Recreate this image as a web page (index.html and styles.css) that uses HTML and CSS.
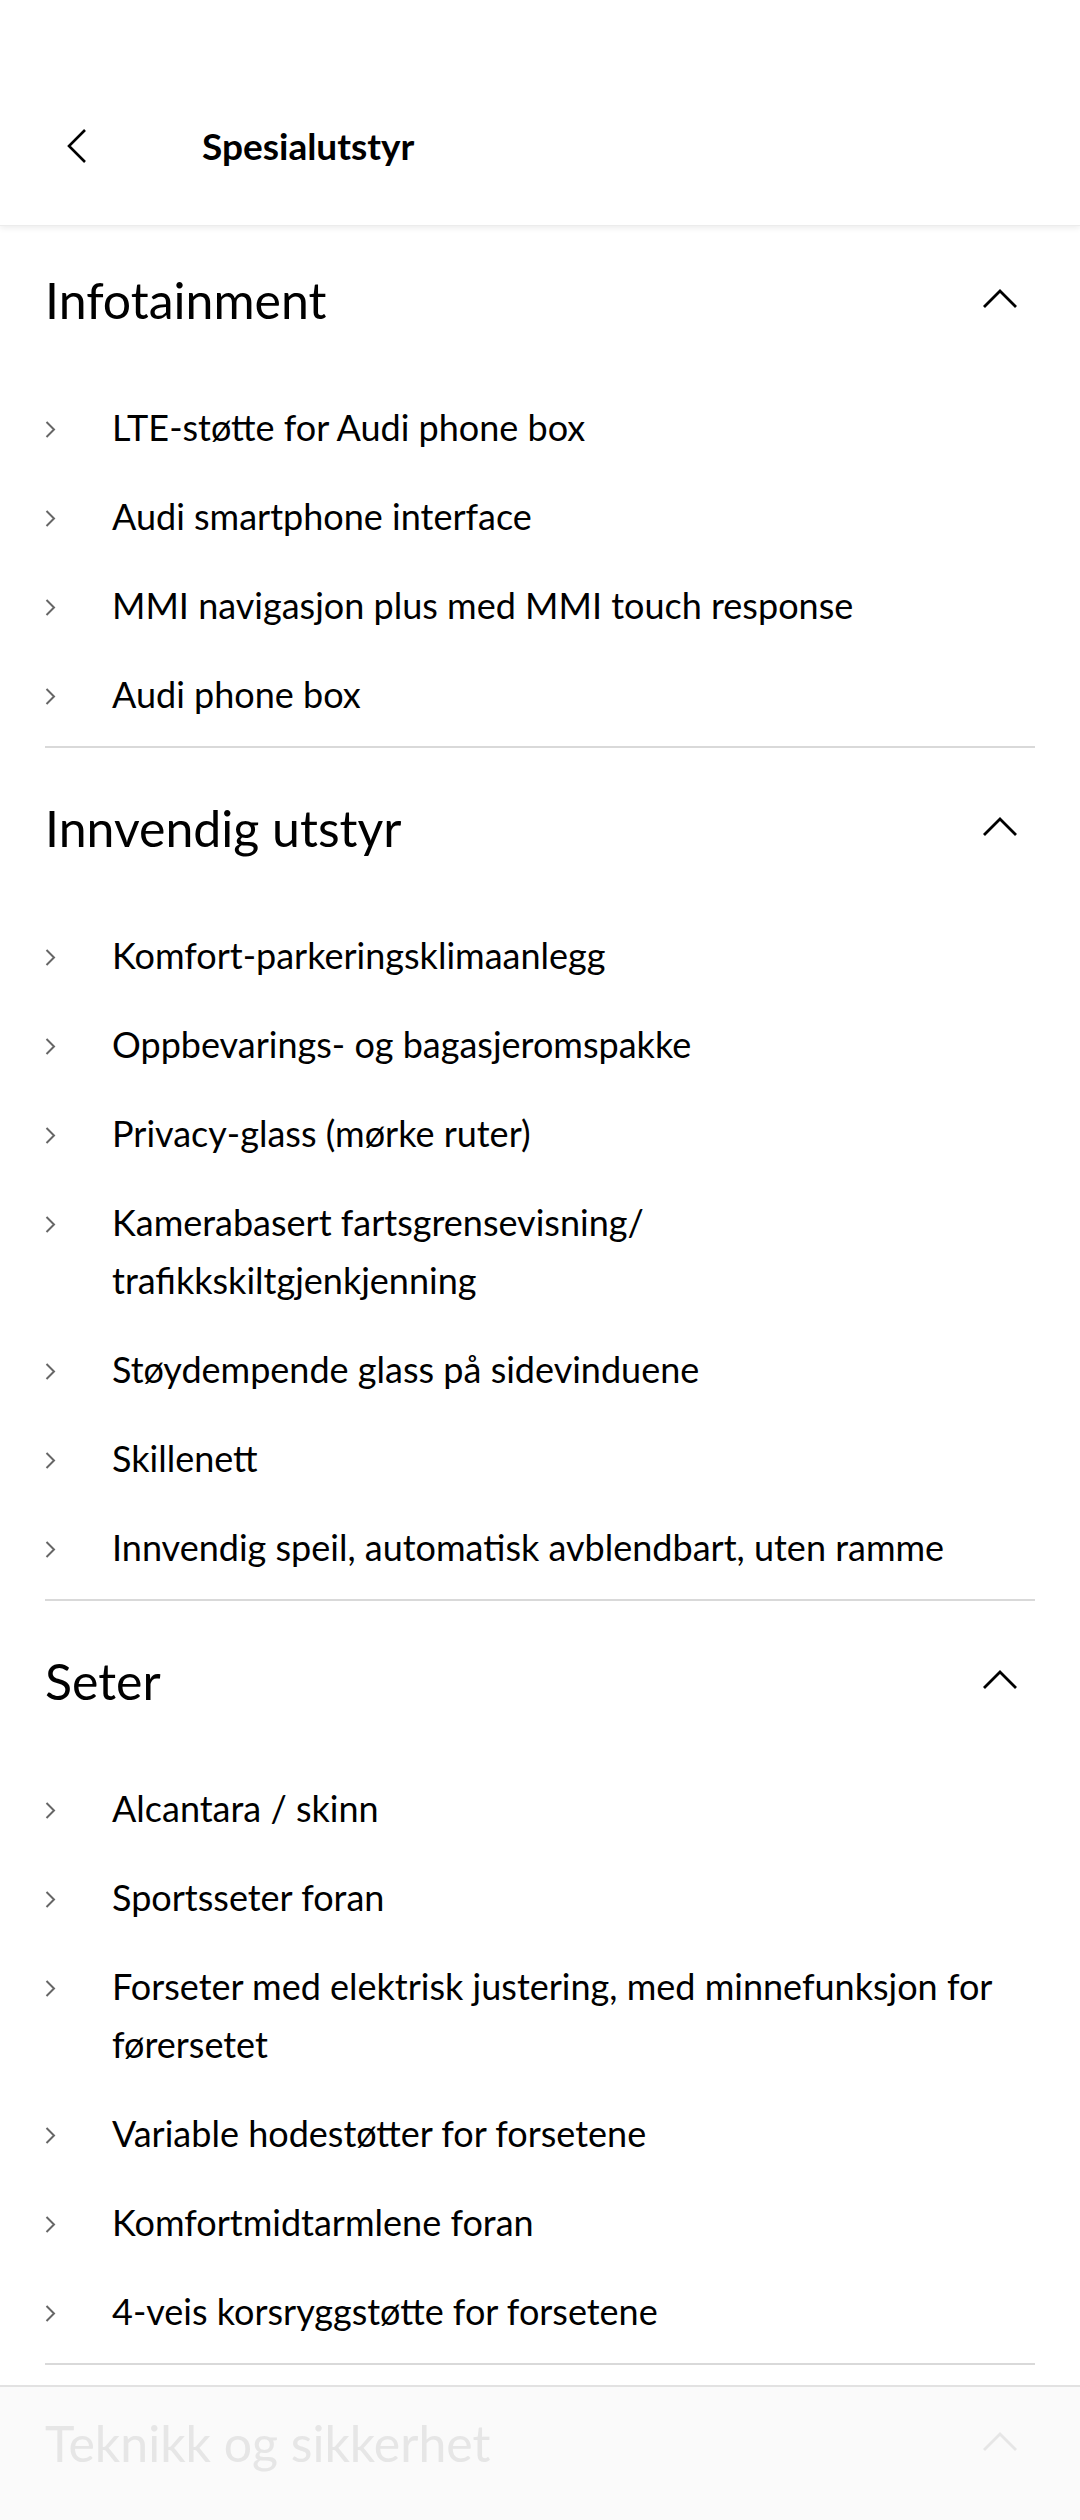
FILE: index.html
```html
<!DOCTYPE html>
<html lang="nb">
<head>
    <meta charset="UTF-8">
    <meta name="viewport" content="width=device-width, initial-scale=1.0">
    <title>Spesialutstyr</title>
    <link rel="stylesheet" href="styles.css">
</head>
<body>

<header class="topbar">
    <div class="topbar-row">
        <svg class="back-icon" width="20" height="34" viewBox="0 0 20 34">
            <path d="M18 1 L2 17 L18 33" fill="none" stroke="#000" stroke-width="2.6"/>
        </svg>
        <h1 class="page-title">Spesialutstyr</h1>
    </div>
</header>

<main class="content">

    <section class="group first">
        <div class="group-head">
            <h2>Infotainment</h2>
            <svg class="toggle" width="34" height="20" viewBox="0 0 34 20">
                <path d="M1 19 L17 3 L33 19" fill="none" stroke="#000" stroke-width="2.8"/>
            </svg>
        </div>
        <ul class="items">
            <li><span class="bullet"></span><span>LTE-støtte for Audi phone box</span></li>
            <li><span class="bullet"></span><span>Audi smartphone interface</span></li>
            <li><span class="bullet"></span><span>MMI navigasjon plus med MMI touch response</span></li>
            <li><span class="bullet"></span><span>Audi phone box</span></li>
        </ul>
    </section>

    <section class="group">
        <div class="group-head">
            <h2>Innvendig utstyr</h2>
            <svg class="toggle" width="34" height="20" viewBox="0 0 34 20">
                <path d="M1 19 L17 3 L33 19" fill="none" stroke="#000" stroke-width="2.8"/>
            </svg>
        </div>
        <ul class="items">
            <li><span class="bullet"></span><span>Komfort-parkeringsklimaanlegg</span></li>
            <li><span class="bullet"></span><span>Oppbevarings- og bagasjeromspakke</span></li>
            <li><span class="bullet"></span><span>Privacy-glass (mørke ruter)</span></li>
            <li><span class="bullet"></span><span>Kamerabasert fartsgrensevisning/<br>trafikkskiltgjenkjenning</span></li>
            <li><span class="bullet"></span><span>Støydempende glass på sidevinduene</span></li>
            <li><span class="bullet"></span><span>Skillenett</span></li>
            <li><span class="bullet"></span><span>Innvendig speil, automatisk avblendbart, uten ramme</span></li>
        </ul>
    </section>

    <section class="group">
        <div class="group-head">
            <h2>Seter</h2>
            <svg class="toggle" width="34" height="20" viewBox="0 0 34 20">
                <path d="M1 19 L17 3 L33 19" fill="none" stroke="#000" stroke-width="2.8"/>
            </svg>
        </div>
        <ul class="items">
            <li><span class="bullet"></span><span>Alcantara / skinn</span></li>
            <li><span class="bullet"></span><span>Sportsseter foran</span></li>
            <li><span class="bullet"></span><span>Forseter med elektrisk justering, med minnefunksjon for førersetet</span></li>
            <li><span class="bullet"></span><span>Variable hodestøtter for forsetene</span></li>
            <li><span class="bullet"></span><span>Komfortmidtarmlene foran</span></li>
            <li><span class="bullet"></span><span>4-veis korsryggstøtte for forsetene</span></li>
        </ul>
    </section>

    <section class="group-next">
        <div class="group-head">
            <h2>Teknikk og sikkerhet</h2>
            <svg class="toggle" width="34" height="20" viewBox="0 0 34 20">
                <path d="M1 19 L17 3 L33 19" fill="none" stroke="#e6e6e6" stroke-width="2.8"/>
            </svg>
        </div>
    </section>

</main>

</body>
</html>
```

FILE: styles.css
```css
* {
    box-sizing: border-box;
}

body {
    margin: 0;
    background-color: #fff;
    color: #000;
    font-family: Lato, "Noto Sans", sans-serif;
    overflow: hidden;
}

/* Верхняя панель */
.topbar {
    height: 226px;
    padding-top: 114px;
    background-color: #fff;
    box-shadow: 0 2px 6px rgba(0, 0, 0, 0.08);
    border-bottom: 1px solid #ececec;
    position: relative;
    z-index: 1;
}

.topbar-row {
    display: flex;
    align-items: center;
    height: 64px;
    padding-left: 67px;
}

.back-icon {
    flex: none;
}

.page-title {
    margin: 0 0 0 115px;
    font-size: 37px;
    font-weight: 700;
    line-height: 64px;
}

/* Группы */
.group {
    margin: 0 45px;
    padding-top: 48px;
    padding-bottom: 8px;
    border-bottom: 2px solid #d9d9d9;
}

.group.first {
    padding-top: 42px;
}

.group-head {
    display: flex;
    justify-content: space-between;
    align-items: center;
    height: 64px;
}

.group-head h2 {
    margin: 0;
    font-size: 50px;
    font-weight: 400;
    line-height: 64px;
}

.toggle {
    flex: none;
    margin-right: 18px;
    margin-top: -4px;
}

.items {
    list-style: none;
    margin: 50px 0 0;
    padding: 0;
}

.items li {
    display: flex;
    align-items: flex-start;
    padding: 15.5px 0;
    font-size: 36px;
    line-height: 58px;
}

.bullet {
    flex: none;
    width: 67px;
    height: 58px;
    background: no-repeat 0 23px / 11px 17px url("data:image/svg+xml;utf8,<svg xmlns='http://www.w3.org/2000/svg' width='11' height='17' viewBox='0 0 11 17'><path d='M1.5 1 L9 8.5 L1.5 16' fill='none' stroke='%23666' stroke-width='2'/></svg>");
}

/* Следующая (свернутая) группа */
.group-next {
    margin-top: 20px;
    padding: 24px 45px 0;
    height: 200px;
    background-color: #fafafa;
    border-top: 2px solid #e2e2e2;
}

.group-next h2 {
    color: #e6e6e6;
}
```
